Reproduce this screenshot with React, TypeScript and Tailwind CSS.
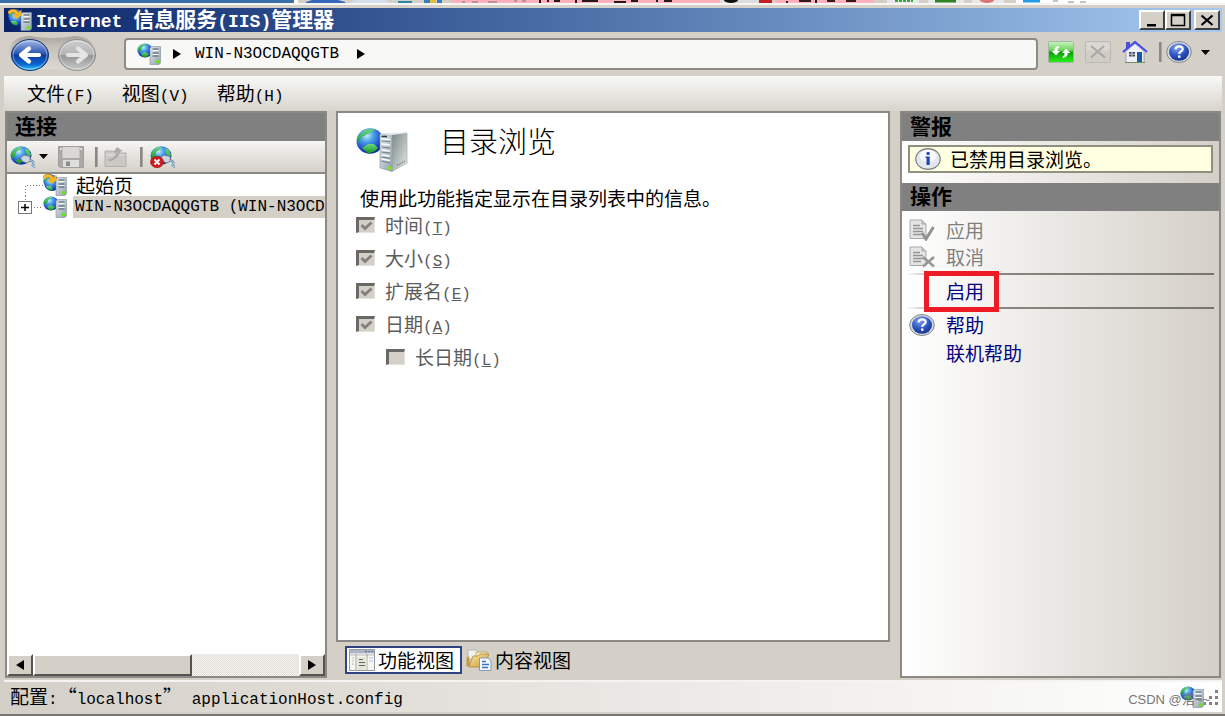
import type { ReactNode } from 'react';

function Latin({ children }: { children: ReactNode }) {
  return <span className="font-['Liberation_Mono',monospace] text-base leading-none">{children}</span>;
}

function Defs() {
  return (
    <svg width="0" height="0" className="absolute" aria-hidden="true">
      <defs>
        <radialGradient id="globe" cx="0.38" cy="0.28" r="0.8">
          <stop offset="0" stopColor="#c9edff" />
          <stop offset="0.3" stopColor="#4fa6ea" />
          <stop offset="0.7" stopColor="#1c47c4" />
          <stop offset="1" stopColor="#0c2180" />
        </radialGradient>
        <linearGradient id="land" x1="0" y1="0" x2="0" y2="1">
          <stop offset="0" stopColor="#6fd483" />
          <stop offset="1" stopColor="#129a1c" />
        </linearGradient>
        <linearGradient id="metal" x1="0" y1="0" x2="1" y2="1">
          <stop offset="0" stopColor="#dfe6ea" />
          <stop offset="1" stopColor="#94a3ae" />
        </linearGradient>
        <linearGradient id="side" x1="0" y1="0" x2="1" y2="1">
          <stop offset="0" stopColor="#7b8785" />
          <stop offset="0.5" stopColor="#b0b9b8" />
          <stop offset="1" stopColor="#e5e9e8" />
        </linearGradient>
        <linearGradient id="orbBlue" x1="0" y1="0" x2="0" y2="1">
          <stop offset="0" stopColor="#a9bce6" />
          <stop offset="0.45" stopColor="#2a56b4" />
          <stop offset="0.5" stopColor="#0b3a9c" />
          <stop offset="0.8" stopColor="#0a66d0" />
          <stop offset="1" stopColor="#35cbff" />
        </linearGradient>
        <linearGradient id="orbGray" x1="0" y1="0" x2="0" y2="1">
          <stop offset="0" stopColor="#cfcfcf" />
          <stop offset="0.48" stopColor="#b4b4b4" />
          <stop offset="0.52" stopColor="#969696" />
          <stop offset="1" stopColor="#c9c9c9" />
        </linearGradient>
        <linearGradient id="pill" x1="0" y1="0" x2="0" y2="1">
          <stop offset="0" stopColor="#a8a59d" />
          <stop offset="0.3" stopColor="#c5c1b9" />
          <stop offset="1" stopColor="#dedbd5" />
        </linearGradient>
        <linearGradient id="green" x1="0" y1="0" x2="0" y2="1">
          <stop offset="0" stopColor="#c9f5c0" />
          <stop offset="0.42" stopColor="#6fd35f" />
          <stop offset="0.5" stopColor="#0a9a0a" />
          <stop offset="1" stopColor="#2cf01c" />
        </linearGradient>
        <radialGradient id="help" cx="0.4" cy="0.25" r="0.8">
          <stop offset="0" stopColor="#7fa3ee" />
          <stop offset="0.6" stopColor="#2a52c0" />
          <stop offset="1" stopColor="#143089" />
        </radialGradient>
        <linearGradient id="folder" x1="0" y1="0" x2="1" y2="1">
          <stop offset="0" stopColor="#fbe7a0" />
          <stop offset="1" stopColor="#c89a3c" />
        </linearGradient>
      </defs>
    </svg>
  );
}

function SiteIcon({ home = false }: { home?: boolean }) {
  return (
    <svg viewBox="0 0 24 22" className="h-[22px] w-6 shrink-0" aria-hidden="true">
      <ellipse cx="8" cy="7.5" rx="7.6" ry="7" fill="url(#globe)" />
      <path d="M0.800 6 Q2 1.500 8 0.800 L9 2 L5 4 L4 7 L2 9 Z" fill="url(#land)" />
      <path d="M4 10.500 L8 9 L12 11 L10 14 L6 14 Z" fill="url(#land)" />
      {home && (
        <>
          <ellipse cx="9" cy="10" rx="7.500" ry="7" fill="url(#globe)" />
          <path d="M3 12 L8 12 L10 15 L8 16.500 L4.500 15 Z" fill="url(#land)" />
        </>
      )}
      <path d="M13 5 L15 3.500 H23.500 V20 L22 21.500 H13 Z" fill="url(#metal)" stroke="#818e97" strokeWidth="0.600" />
      <path d="M15.500 6 H21.500 M15.500 10 H21.500 M15.500 13 H21.500" stroke="#4c5a65" strokeWidth="1.100" />
      <path d="M15.500 7.500 H21.500 M15.500 11.500 H21.500" stroke="#f6fafb" strokeWidth="0.900" />
      <ellipse cx="20.500" cy="18.600" rx="2" ry="1.700" fill="#65e50c" />
      {home && (
        <>
          <path d="M1 4.500 Q2 1.500 6 2 Q9.500 2.500 9 7" fill="none" stroke="#a96b08" strokeWidth="3.800" />
          <path d="M1 4.500 Q2 1.500 6 2 Q9.500 2.500 9 7" fill="none" stroke="#f5bd3a" strokeWidth="2.600" />
          <path d="M4.500 6.500 H13.500 V0.500 L11 3 Z M4.500 6.500 L9 10 L13.500 6" fill="#f2b326" />
        </>
      )}
    </svg>
  );
}

function FeatureIcon() {
  return (
    <svg viewBox="0 0 52 44" className="h-11 w-[52px] shrink-0" aria-hidden="true">
      <ellipse cx="14" cy="13" rx="13.500" ry="12.800" fill="url(#globe)" />
      <path d="M2 9 Q6 1 15 0.500 L19 2 L14 5 L10 7 L6 9 L3 13 L1 16 Z" fill="url(#land)" opacity="0.850" />
      <path d="M6 20 L12 16 L18 16 L22 20 Q18 25 12 25 Z" fill="url(#land)" />
      <path d="M36 6 L51 5 V35 L36 43.500 Z" fill="url(#side)" stroke="#9aa3a2" strokeWidth="0.600" />
      <path d="M24 6 L36 6 V43.500 L24 40 Z" fill="url(#metal)" stroke="#8c979c" strokeWidth="0.600" />
      <path d="M24 6 L38 4.500 L51 5 L36 7 Z" fill="#e3e8e8" />
      <path d="M25.500 8.500 H31" stroke="#2c3a44" strokeWidth="1.600" />
      <path d="M25.500 13 L34 13.500 M25.500 19 L34 20 M25.500 24 L34 25 M25.500 29 L34 30.500 M25.500 33 L34 35" stroke="#6f808c" strokeWidth="1" />
      <path d="M25.500 11 L34 11.500 M25.500 16 L34 17 M25.500 22 L34 23 M25.500 27 L34 28 M25.500 31 L34 32.500" stroke="#f7fafb" strokeWidth="1.600" />
      <path d="M41 37.500 L49 33" stroke="#77817f" strokeWidth="1.500" strokeDasharray="1 1" />
      <circle cx="34" cy="40" r="2" fill="#72e818" />
    </svg>
  );
}

function ConnectIcon({ remove = false }: { remove?: boolean }) {
  return (
    <svg viewBox="0 0 26 22" className="h-[22px] w-[26px]" aria-hidden="true">
      <ellipse cx="11" cy="9.500" rx="10.500" ry="9.200" fill="url(#globe)" />
      <path d="M1 9 Q3 2 9 1 L12 1 L9 4 L6 6 L5 10 L3 13 Z" fill="url(#land)" />
      <path d="M15 2 L19 4 L21 9 L19 12 L16 7 Z M5 14 L9 13 L13 15 L9 18 Z" fill="url(#land)" />
      <path d="M10.500 12 L14 9 L20 10.500 L20.500 15 L17 17 L12.500 15.500 Z" fill="#cdd6de" stroke="#667987" strokeWidth="0.800" />
      <path d="M19.500 14.500 Q24.500 15 23 18 Q22 20.500 25 20.500" fill="none" stroke="#57809f" strokeWidth="2.400" />
      <path d="M19.500 14.500 Q24.500 15 23 18 Q22 20.500 25 20.500" fill="none" stroke="#b6d0e2" strokeWidth="1.200" />
      {remove && (
        <>
          <ellipse cx="7" cy="16" rx="6.500" ry="5.700" fill="#cf1d1d" stroke="#8c0d0d" strokeWidth="0.600" />
          <path d="M4.500 13.500 L9.500 18.500 M9.500 13.500 L4.500 18.500" stroke="#fff" strokeWidth="1.800" />
        </>
      )}
    </svg>
  );
}

function HelpIcon() {
  return (
    <svg viewBox="0 0 26 22" className="h-[22px] w-[26px] shrink-0" aria-hidden="true">
      <ellipse cx="13" cy="11" rx="12.300" ry="10.500" fill="#d5d8dc" stroke="#85878c" strokeWidth="1" />
      <ellipse cx="13" cy="11" rx="10" ry="8.800" fill="url(#help)" />
      <path d="M9.500 8.300 Q9.800 5.300 13.200 5.300 Q16.700 5.300 16.700 8 Q16.700 9.600 14.800 10.500 Q13.200 11.300 13.200 13" fill="none" stroke="#fff" strokeWidth="2.200" />
      <rect x="12" y="14.500" width="2.500" height="2.300" fill="#fff" />
    </svg>
  );
}

function InfoIcon() {
  return (
    <svg viewBox="0 0 26 22" className="h-[22px] w-[26px] shrink-0" aria-hidden="true">
      <ellipse cx="13" cy="11" rx="12.200" ry="10.400" fill="#e4e7ee" stroke="#7b7d82" strokeWidth="1.200" />
      <ellipse cx="13" cy="8" rx="8.500" ry="6" fill="#f8f9fc" />
      <rect x="11.500" y="4" width="3.200" height="3" rx="1" fill="#2347b8" />
      <path d="M10.500 8.500 H14.700 V17 H11.500 V10 H10.500 Z" fill="#2347b8" />
    </svg>
  );
}

function BackForwardBase() {
  return (
    <svg viewBox="0 0 88 38" className="h-[38px] w-[88px] [grid-area:1/1]" aria-hidden="true">
      <path d="M21 1 Q44 5 67 1 Q86 2 87 18 Q86 36 67 36 Q44 32 21 36 Q2 36 1 18 Q2 2 21 1 Z" fill="url(#pill)" />
    </svg>
  );
}

function Orb({ forward = false }: { forward?: boolean }) {
  return (
    <svg viewBox="0 0 38 32" className="h-8 w-[38px]" aria-hidden="true">
      <ellipse cx="19" cy="16" rx="18.500" ry="15.500" fill={forward ? 'url(#orbGray)' : 'url(#orbBlue)'} stroke={forward ? '#8d8d8d' : '#173778'} strokeWidth="1" />
      <ellipse cx="19" cy="16" rx="17" ry="14" fill="none" stroke="#fff" strokeOpacity="0.450" strokeWidth="1" />
      <path
        d={forward ? 'M10 16 H27 M20 9.500 L28 16 L20 22.500' : 'M28 16 H11 M18 9.500 L10 16 L18 22.500'}
        fill="none"
        stroke={forward ? '#e4e4e4' : '#fff'}
        strokeWidth="4.200"
        strokeLinecap="round"
        strokeLinejoin="round"
      />
    </svg>
  );
}

function RefreshIcon() {
  return (
    <svg viewBox="0 0 26 22" className="h-[22px] w-[26px]" aria-hidden="true">
      <rect x="0.500" y="0.500" width="25" height="21" rx="1" fill="url(#green)" stroke="#a5b5a3" />
      <path d="M10 5 Q5.500 6.500 6.500 10 H3.500 L8 14.500 L12 10 H9.500 Q9 7.500 11.500 6 Z" fill="#fff" />
      <path d="M15 17 Q20.500 15.500 19.500 12 H22.500 L18 7.500 L14 12 H16.500 Q17 14.500 14.500 16 Z" fill="#fff" />
    </svg>
  );
}

function StopIcon() {
  return (
    <svg viewBox="0 0 26 22" className="h-[22px] w-[26px]" aria-hidden="true">
      <rect x="0.500" y="0.500" width="25" height="21" rx="1" fill="#d0cdc7" stroke="#bbb9b5" />
      <rect x="1.500" y="1.500" width="23" height="8" fill="#dbd8d3" />
      <path d="M6 5 L20 16.500 M19 5 L6 16.500" stroke="#aaa8a4" strokeWidth="2.200" />
    </svg>
  );
}

function HomeIcon() {
  return (
    <svg viewBox="0 0 26 22" className="h-[22px] w-[26px]" aria-hidden="true">
      <path d="M4 1 H8 V8 H4 Z" fill="#4a52cf" />
      <path d="M4 10 L13 2 L22 10 V21.500 H4 Z" fill="#f0f1f5" stroke="#8f98aa" strokeWidth="0.800" />
      <path d="M1 11 L13 1 L25 11" fill="none" stroke="#4550d8" strokeWidth="2.200" />
      <path d="M2.500 11.800 L13 3.200 L23.500 11.800" fill="none" stroke="#b7bdf2" strokeWidth="0.800" />
      <rect x="7" y="11" width="6" height="4.500" fill="#444c5a" />
      <path d="M10 11 V15.500 M7 13.200 H13" stroke="#e4e7ee" strokeWidth="0.800" />
      <rect x="15" y="11" width="5" height="10" fill="#1757a5" />
      <path d="M3 21.500 H23" stroke="#6b9266" />
    </svg>
  );
}

function Caret() {
  return (
    <svg viewBox="0 0 9 5" className="h-[5px] w-[9px]" aria-hidden="true">
      <path d="M0 0 H9 L4.500 5 Z" fill="#000" />
    </svg>
  );
}

function Triangle({ left = false }: { left?: boolean }) {
  return (
    <svg viewBox="0 0 8 10" className="h-[10px] w-2 shrink-0" aria-hidden="true">
      <path d={left ? 'M8 0 V10 L0 5 Z' : 'M0 0 V10 L8 5 Z'} fill="#000" />
    </svg>
  );
}

function SaveIcon() {
  return (
    <svg viewBox="0 0 26 22" className="h-[22px] w-[26px]" aria-hidden="true">
      <path d="M0.500 0.500 H25.500 V21.500 H2 L0.500 20 Z" fill="#aaa9a7" stroke="#a09f9d" />
      <rect x="4.500" y="1" width="17" height="11" fill="#d9d8d6" />
      <path d="M5 14 H21 V21 H5 Z" fill="#dededc" />
      <rect x="8" y="15.500" width="4" height="4.500" fill="#8c8c8c" />
      <path d="M2 3 H3.500 M22.500 3 H24" stroke="#eee" strokeWidth="2" />
    </svg>
  );
}

function UpIcon() {
  return (
    <svg viewBox="0 0 24 22" className="h-[22px] w-6" aria-hidden="true">
      <path d="M1 5 H9 L11 7 H22 V20.500 H1 Z" fill="#cbc9c6" stroke="#b1afac" />
      <path d="M2 9 H21" stroke="#e4e2df" />
      <path d="M4 13 Q11 12.500 12.500 6.500 L9.500 6 L13 1 L18.500 5 L16 6 Q14 14 5 15.500 Z" fill="#aeaca9" />
    </svg>
  );
}

function PageIcon({ cancel = false }: { cancel?: boolean }) {
  return (
    <svg viewBox="0 0 26 22" className="h-[22px] w-[26px] shrink-0" aria-hidden="true">
      <path d="M1 1 H13 L17 5 V19.500 H1 Z" fill="#e5e5e5" stroke="#aaa" />
      <path d="M13 1 V5 H17" fill="#ccc" stroke="#aaa" />
      <path d="M4 6.500 H11 M4 9.500 H14 M4 12.500 H14 M4 15.500 H12" stroke="#949494" strokeWidth="1.300" />
      {cancel ? (
        <path d="M14 11 L25 20.500 M25 11 L14 20.500" stroke="#969696" strokeWidth="2.500" />
      ) : (
        <path d="M13 14 L17 20 L24.500 8" fill="none" stroke="#929292" strokeWidth="3" />
      )}
    </svg>
  );
}

function FeaturesViewIcon() {
  return (
    <svg viewBox="0 0 26 22" className="h-[22px] w-[26px] shrink-0" aria-hidden="true">
      <rect x="0.500" y="0.500" width="25" height="21" fill="#f5f5f2" stroke="#979a9f" />
      <rect x="1" y="1" width="24" height="3" fill="#abb4c2" />
      <path d="M16 2.500 H18 M19.500 2.500 H21 M22.500 2.500 H24" stroke="#4c6499" />
      <rect x="1" y="4" width="24" height="3" fill="#d8d9d8" />
      <path d="M7 5 V21 M18 5 V21" stroke="#a5a6a2" />
      <path d="M3 9 H5 M3 12 H5 M3 15 H5" stroke="#b6b6b4" />
      <rect x="8" y="8" width="9.500" height="13" fill="#e5e5d8" />
      <path d="M10 10.500 H14 M10 13.500 H16 M10 16.500 H16" stroke="#636363" strokeWidth="1.200" />
      <path d="M20 9 H24 M20 12 H24" stroke="#c2d7ed" strokeWidth="1.500" />
    </svg>
  );
}

function ContentViewIcon() {
  return (
    <svg viewBox="0 0 26 22" className="h-[22px] w-[26px] shrink-0" aria-hidden="true">
      <path d="M2 1 H10 L12 3 V10 H2 Z" fill="#f2f2ee" stroke="#aaa" strokeWidth="0.800" />
      <path d="M10 3 H21 V13 H10 Z" fill="#f4ebcb" stroke="#b5a15d" strokeWidth="0.800" />
      <path d="M0.500 9 L3 7 L4 18 L0.500 17 Z" fill="#c5993f" />
      <path d="M7 7 H12 L14 5 H23 L18 18 H3 Z" fill="url(#folder)" stroke="#b28a38" strokeWidth="0.800" />
      <path d="M13.500 9 H22 L25 12 V21.500 H13.500 Z" fill="#f6fafe" stroke="#829bb8" />
      <path d="M16 12.500 H20 M16 15.500 H23 M16 18.500 H22" stroke="#3177c4" strokeWidth="1.500" />
    </svg>
  );
}

function ToolSeparator() {
  return <span className="h-5 w-[3px] border-l-2 border-[#8a8884] bg-[#aaa7a1]" />;
}

function WindowButton({ label, children }: { label: string; children: ReactNode }) {
  return (
    <button aria-label={label} className="flex h-5 w-[26px] items-center justify-center border-2 border-t-white border-r-[#404040] border-b-[#404040] border-l-white bg-[#d4d0c8]">
      {children}
    </button>
  );
}

function BackgroundEdge() {
  return (
    <div className="flex h-[3px] shrink-0 overflow-hidden bg-[#d4d0c8]">
      <div className="w-[294px] bg-[#3a6ea5]" />
      <svg viewBox="0 0 931 3" className="h-[3px] w-[931px] shrink-0" aria-hidden="true">
        <path d="M0 0 H4 V3 H0 Z" fill="#fff" />
        <path d="M12 2 L18 0 H44 L51 2 V3 H12 Z" fill="#3668b9" />
        <path d="M57 2 L62 0 H90 L96 2 V3 H57 Z" fill="#d3deee" />
        <path d="M104 1 H118 V3 H104 Z" fill="#2987ab" />
        <path d="M130 0 H136 V3 H130 Z M143 0 H148 V3 H143 Z" fill="#377fbc" />
        <path d="M136 0 H142 V3 H136 Z" fill="#e3bd39" />
        <path d="M157 0 H426 V3 H157 Z" fill="#ffb0bd" />
        <path d="M168 2 H171 M178 2 H184 M194 2 H203 M220 1 H223 M228 1 H232" stroke="#777" />
        <path d="M246 0 V3 M254 0 V2 M260 1 H266 M282 0 V3 M288 1 H304 M320 2 H332 M337 1 H344 M363 0 V2 M370 1 H378" stroke="#27191d" strokeWidth="2" />
        <path d="M426 0 H465 V3 H426 Z" fill="#ddd" />
        <ellipse cx="437" cy="0" rx="7" ry="3" fill="#111" />
        <path d="M465 0 H478 V3 H465 Z" fill="#c52020" />
        <path d="M482 0 H580 V3 H482 Z" fill="#ffb0bd" />
        <path d="M492 2 H494 M505 1 H517 M522 0 V3 M533 1 H541 M552 1 H562" stroke="#331d21" strokeWidth="2" />
        <path d="M593 0 H625 V3 H593 Z M634 0 H670 V3 H634 Z M678 0 H710 V3 H678 Z" fill="#e8e8e8" />
        <path d="M601 1 H619" stroke="#35a935" strokeWidth="2" strokeDasharray="3 1" />
        <path d="M641 1 H662" stroke="#2f8325" strokeWidth="3" />
        <ellipse cx="693" cy="0" rx="7" ry="3" fill="#dc7474" />
        <path d="M722 0 H931 V3 H722 Z" fill="#fff" />
        <path d="M729 1 H746" stroke="#249be7" strokeWidth="3" />
        <path d="M759 1 H764 M774 2 H780 M786 2 H792" stroke="#888" />
      </svg>
    </div>
  );
}

function TitleBar() {
  return (
    <header className="flex h-6 shrink-0 items-center bg-linear-to-r from-[#0a246a] to-[#a6caf0] pr-[2px] pl-1 text-white">
      <SiteIcon home />
      <h1 className="ml-1 h-6 flex-1 text-[21px] leading-[21px] font-bold whitespace-pre">
        <span className="font-['Liberation_Mono',monospace] text-lg leading-none">{'Internet '}</span>
        信息服务
        <span className="font-['Liberation_Mono',monospace] text-lg leading-none">(IIS)</span>
        管理器
      </h1>
      <div className="flex">
        <WindowButton label="最小化">
          <svg viewBox="0 0 16 14" className="h-[14px] w-4" aria-hidden="true"><path d="M3 11 H12 V13.500 H3 Z" fill="#000" /></svg>
        </WindowButton>
        <WindowButton label="最大化">
          <svg viewBox="0 0 16 14" className="h-[14px] w-4" aria-hidden="true"><path d="M1.500 2 H14.500 V12.500 H1.500 Z M1 2 H15" fill="none" stroke="#000" strokeWidth="1.500" /><path d="M1 2 H15" stroke="#000" strokeWidth="2.500" /></svg>
        </WindowButton>
        <span className="w-[3px]" />
        <WindowButton label="关闭">
          <svg viewBox="0 0 16 14" className="h-[14px] w-4" aria-hidden="true"><path d="M2.500 2.500 L13.500 12 M13.500 2.500 L2.500 12" stroke="#000" strokeWidth="2.200" /></svg>
        </WindowButton>
      </div>
    </header>
  );
}

function NavigationBar() {
  return (
    <nav className="flex h-[44px] shrink-0 items-center">
      <div className="ml-1 grid w-[92px] items-center">
        <BackForwardBase />
        <div className="z-10 ml-[3px] flex gap-[9px] pt-[2px] [grid-area:1/1]">
          <button aria-label="后退"><Orb /></button>
          <button aria-label="前进" disabled><Orb forward /></button>
        </div>
      </div>
      <div className="ml-6 flex h-8 min-w-0 flex-1 items-center rounded-sm border-2 border-[#8d8b88] bg-[#f8f8f7] pl-[11px]">
        <SiteIcon />
        <span className="ml-3 flex"><Triangle /></span>
        <span className="ml-[14px] flex"><Latin>WIN-N3OCDAQQGTB</Latin></span>
        <span className="ml-[18px] flex"><Triangle /></span>
      </div>
      <div className="ml-[10px] flex h-full items-center gap-[11px] pr-3 pb-1">
        <button aria-label="刷新"><RefreshIcon /></button>
        <button aria-label="停止" disabled><StopIcon /></button>
        <button aria-label="主页"><HomeIcon /></button>
        <div className="flex items-center gap-1">
          <ToolSeparator />
          <button aria-label="帮助" className="flex items-center gap-[9px]"><HelpIcon /><Caret /></button>
        </div>
      </div>
    </nav>
  );
}

const menus = [
  { name: '文件', mnemonic: 'F' },
  { name: '视图', mnemonic: 'V' },
  { name: '帮助', mnemonic: 'H' },
];

function MenuBar() {
  return (
    <div className="flex h-[35px] shrink-0 items-center gap-7 bg-linear-to-b from-[#f9f9f8] to-[#d7d4cc] pb-[2px] pl-[23px]">
      {menus.map((m) => (
        <button key={m.name} className="leading-6">{m.name}<Latin>({m.mnemonic})</Latin></button>
      ))}
    </div>
  );
}

function PanelTitle({ children }: { children: ReactNode }) {
  return <h2 className="h-7 bg-[#808080] pl-2 text-[21px] leading-6 font-bold">{children}</h2>;
}

function ConnectionsPanel() {
  return (
    <aside className="flex w-[322px] shrink-0 flex-col border-2 border-[#8b8984] bg-white">
      <PanelTitle>连接</PanelTitle>
      <div className="flex h-[33px] shrink-0 items-center border-b-2 border-[#8b8984] bg-linear-to-b from-[#f6f5f3] to-[#d5d1ca] pl-[3px]">
        <button aria-label="创建新连接" className="flex items-center gap-[3px]"><ConnectIcon /><Caret /></button>
        <button aria-label="保存连接" disabled className="ml-[10px]"><SaveIcon /></button>
        <span className="ml-[11px] flex"><ToolSeparator /></span>
        <button aria-label="向上" disabled className="ml-[6px]"><UpIcon /></button>
        <span className="ml-3 flex"><ToolSeparator /></span>
        <button aria-label="删除连接" className="ml-[7px]"><ConnectIcon remove /></button>
      </div>
      <ul className="flex-1 leading-[22px]">
        <li className="flex h-[22px] items-center">
          <svg viewBox="0 0 36 22" className="h-[22px] w-9 shrink-0" aria-hidden="true">
            <path d="M18.500 22 V11.500 H36" fill="none" stroke="#777" strokeDasharray="1 2" />
          </svg>
          <SiteIcon home />
          <span className="ml-[9px]">起始页</span>
        </li>
        <li className="flex h-[22px] items-center">
          <svg viewBox="0 0 36 22" className="h-[22px] w-9 shrink-0" aria-hidden="true">
            <path d="M18.500 0 V5 M27 11.500 H36" fill="none" stroke="#777" strokeDasharray="1 2" />
            <rect x="11.500" y="5.500" width="13" height="12" fill="#fff" stroke="#777" />
            <path d="M14 11.500 H22 M18 8 V15" stroke="#000" strokeWidth="1.500" />
          </svg>
          <SiteIcon />
          <span className="ml-[6px] flex h-[22px] min-w-0 flex-1 items-center bg-[#d4d0c8] pl-[2px] whitespace-pre">
            <Latin>WIN-N3OCDAQQGTB (WIN-N3OCD</Latin>
          </span>
        </li>
      </ul>
      <div className="flex h-[22px] shrink-0 bg-[#ebe9e4] bg-[repeating-conic-gradient(#e0ddd7_0_25%,#f5f4f2_0_50%)] bg-[length:2px_2px]">
        <button aria-label="向左滚动" className="flex w-[26px] items-center justify-center border-2 border-t-white border-r-[#55534f] border-b-[#55534f] border-l-white bg-[#d4d0c8]"><Triangle left /></button>
        <div className="w-1/2 border-2 border-t-white border-r-[#55534f] border-b-[#55534f] border-l-white bg-[#d4d0c8]" />
        <button aria-label="向右滚动" className="ml-auto flex w-[26px] items-center justify-center border-2 border-t-white border-r-[#55534f] border-b-[#55534f] border-l-white bg-[#d4d0c8]"><Triangle /></button>
      </div>
    </aside>
  );
}

const options = [
  { name: '时间', key: 'T', checked: true, nested: false },
  { name: '大小', key: 'S', checked: true, nested: false },
  { name: '扩展名', key: 'E', checked: true, nested: false },
  { name: '日期', key: 'A', checked: true, nested: false },
  { name: '长日期', key: 'L', checked: false, nested: true },
];

function FeaturePanel() {
  return (
    <main className="ml-[9px] flex min-w-0 flex-1 flex-col">
      <section className="flex-1 border-2 border-[#8b8984] bg-white px-[18px] pt-[15px]">
        <div className="flex items-start gap-8">
          <FeatureIcon />
          <h2 className="text-[29px] leading-6 font-light">目录浏览</h2>
        </div>
        <p className="mt-[14px] ml-1 leading-6">使用此功能指定显示在目录列表中的信息。</p>
        <ul className="-mt-[2px]">
          {options.map((o) => (
            <li key={o.key} className={o.nested ? 'ml-[30px]' : ''}>
              <label className="flex h-[33px] w-fit items-center gap-[10px] text-[#5c5c5c]">
                <span className="grid">
                  <input type="checkbox" disabled defaultChecked={o.checked} className="h-4 w-[19px] appearance-none border-t-[3px] border-r border-b border-l-[3px] border-t-[#6b6965] border-r-[#e5e2dc] border-b-[#e5e2dc] border-l-[#6b6965] bg-[#d4d0c8] [grid-area:1/1]" />
                  {o.checked && (
                    <svg viewBox="0 0 19 16" className="pointer-events-none h-4 w-[19px] [grid-area:1/1]" aria-hidden="true">
                      <path d="M5.500 8 L9 11.500 L15.500 5.500" fill="none" stroke="#808080" strokeWidth="2.800" />
                    </svg>
                  )}
                </span>
                <span className="leading-6">{o.name}<Latin>(<u>{o.key}</u>)</Latin></span>
              </label>
            </li>
          ))}
        </ul>
      </section>
      <div className="flex h-9 items-center gap-1 pl-[9px]">
        <button className="flex h-7 items-center border-2 border-[#2e437f] bg-white pr-[6px] pl-[2px] leading-6"><FeaturesViewIcon /><span className="ml-[3px]">功能视图</span></button>
        <button className="flex h-7 items-center leading-6"><ContentViewIcon /><span className="ml-[3px]">内容视图</span></button>
      </div>
    </main>
  );
}

function Rule() {
  return <div className="mr-[5px] ml-1 h-[2px] bg-linear-to-r from-transparent via-[#8b8984] via-15% to-[#77756f]" />;
}

function ActionsPanel() {
  return (
    <aside className="ml-[10px] w-[321px] shrink-0 border-2 border-[#8b8984] bg-linear-to-r from-white to-[#d4d0c8]">
      <PanelTitle>警报</PanelTitle>
      <div className="mx-[6px] mt-1 mb-[10px] flex h-7 items-center gap-[9px] border-2 border-[#8e9080] bg-[#ffffe1] pl-[5px] leading-6">
        <InfoIcon />
        已禁用目录浏览。
      </div>
      <PanelTitle>操作</PanelTitle>
      <div className="pt-[5px] leading-6">
        <button disabled className="flex h-[27px] items-center gap-[11px] pl-[7px] text-[#808080]"><PageIcon />应用</button>
        <button disabled className="flex h-[27px] items-center gap-[11px] pl-[7px] text-[#808080]"><PageIcon cancel />取消</button>
        <div className="relative mt-[3px]">
          <Rule />
          <a href="#enable" className="flex h-8 items-center pl-11 text-[#000080]">启用</a>
          <Rule />
          <div className="pointer-events-none absolute -top-[2px] left-[22px] h-[41px] w-[75px] border-[5px] border-[#ed1c24]" />
        </div>
        <a href="#help" className="mt-[2px] flex h-[28px] items-center gap-[11px] pl-[7px] text-[#000080]"><HelpIcon />帮助</a>
        <a href="#online" className="flex h-[28px] items-center pl-11 text-[#000080]">联机帮助</a>
      </div>
    </aside>
  );
}

function StatusBar() {
  return (
    <footer className="relative mt-[2px] flex h-8 shrink-0 items-center border-t-2 border-[#f5f4f2] bg-linear-to-r from-[#d4d0c8] to-white pl-[6px] leading-6">
      <p className="flex-1 pb-[2px] whitespace-pre">
        配置<Latin>:</Latin>“<Latin>localhost</Latin>”<Latin>{' applicationHost.config'}</Latin>
      </p>
      <SiteIcon />
      <svg viewBox="0 0 16 16" className="mr-[2px] h-4 w-4" aria-hidden="true">
        <path d="M11 1 H14 V4 H11 Z M11 7 H14 V10 H11 Z M11 13 H14 V16 H11 Z M5 7 H8 V10 H5 Z M5 13 H8 V16 H5 Z M0 13 H2 V16 H0 Z" fill="#85817c" />
      </svg>
      <span className="absolute right-3 bottom-0 font-['Liberation_Sans','Noto_Sans_CJK_SC',sans-serif] text-[13px] text-[#777]">CSDN @浩~~</span>
    </footer>
  );
}

export default function App() {
  return (
    <div className="flex min-h-screen flex-col bg-[#d4d0c8] font-['Noto_Sans_CJK_SC',sans-serif] text-[19px] text-black">
      <Defs />
      <BackgroundEdge />
      <div className="flex flex-1 flex-col border-t-2 border-b-2 border-t-[#f7f6f4] border-b-[#777570]">
        <div className="flex flex-1 flex-col pt-[3px] pr-[3px] pb-[2px] pl-1">
          <TitleBar />
          <NavigationBar />
          <MenuBar />
          <div className="flex flex-1 pr-[1px] pl-[1px]">
            <ConnectionsPanel />
            <FeaturePanel />
            <ActionsPanel />
          </div>
          <StatusBar />
        </div>
      </div>
    </div>
  );
}
